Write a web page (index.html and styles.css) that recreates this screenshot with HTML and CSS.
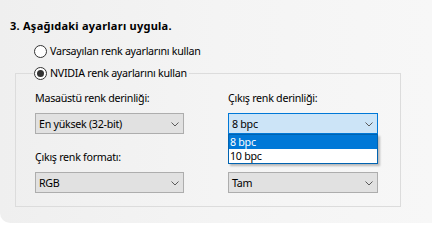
FILE: index.html
```html
<!DOCTYPE html>
<html lang="tr">
<head>
<meta charset="utf-8">
<link rel="stylesheet" href="styles.css">
</head>
<body>
<div class="panel">
  <h3 class="heading">3. Aşağıdaki ayarları uygula.</h3>
  <div class="radio-row">
    <span class="radio"></span><span>Varsayılan renk ayarlarını kullan</span>
  </div>
  <fieldset class="group">
    <legend class="radio-row legend">
      <span class="radio checked"></span><span>NVIDIA renk ayarlarını kullan</span>
    </legend>
    <div class="grid">
      <div class="field">
        <div class="label">Masaüstü renk derinliği:</div>
        <div class="select"><span>En yüksek (32-bit)</span><svg class="chev" width="8" height="5" viewBox="0 0 8 5"><polyline points="0.5,0.5 4,4 7.5,0.5" fill="none" stroke="#5a5a5a" stroke-width="1"/></svg></div>
      </div>
      <div class="field">
        <div class="label">Çıkış renk derinliği:</div>
        <div class="select active"><span>8 bpc</span><svg class="chev" width="8" height="5" viewBox="0 0 8 5"><polyline points="0.5,0.5 4,4 7.5,0.5" fill="none" stroke="#5a5a5a" stroke-width="1"/></svg>
          <ul class="list">
            <li class="sel">8 bpc</li>
            <li>10 bpc</li>
          </ul>
        </div>
      </div>
      <div class="field">
        <div class="label">Çıkış renk formatı:</div>
        <div class="select"><span>RGB</span><svg class="chev" width="8" height="5" viewBox="0 0 8 5"><polyline points="0.5,0.5 4,4 7.5,0.5" fill="none" stroke="#5a5a5a" stroke-width="1"/></svg></div>
      </div>
      <div class="field">
        <div class="label">Çıkış dinamik aralığı:</div>
        <div class="select"><span>Tam</span><svg class="chev" width="8" height="5" viewBox="0 0 8 5"><polyline points="0.5,0.5 4,4 7.5,0.5" fill="none" stroke="#5a5a5a" stroke-width="1"/></svg></div>
      </div>
    </div>
  </fieldset>
</div>
</body>
</html>
```
FILE: styles.css
```css
html, body {
  margin: 0;
  padding: 0;
  background: #ffffff;
}
body {
  font-family: "Noto Sans", "Open Sans", sans-serif;
  font-size: 10.7px;
  letter-spacing: -0.28px;
  line-height: 16px;
  color: #000;
}
.panel {
  height: 223px;
  box-sizing: border-box;
  padding: 18px 0 0 0;
  background: linear-gradient(to right, #efefef 0%, #f4f4f4 50%, #f7f7f7 100%);
  border-bottom-left-radius: 10px;
}
.heading {
  margin: 0 0 0 10px;
  font-size: 11px;
  letter-spacing: 0.25px;
  line-height: 16px;
  font-weight: bold;
}
.radio-row {
  display: flex;
  align-items: center;
  gap: 3px;
  height: 16px;
}
.panel > .radio-row {
  margin: 9px 0 0 34px;
}
.radio {
  box-sizing: border-box;
  width: 13px;
  height: 13px;
  border: 1px solid #333;
  border-radius: 50%;
  background: #fff;
  display: flex;
  align-items: center;
  justify-content: center;
}
.radio.checked::after {
  content: "";
  width: 7px;
  height: 7px;
  border-radius: 50%;
  background: #333;
}
.group {
  margin: 6px 31px 0 15px;
  padding: 0 21px 13px 19px;
  border: 1px solid #dcdcdc;
}
.legend {
  padding: 0 2px 0 0;
  margin-left: -1px;
}
.grid {
  display: grid;
  grid-template-columns: 149px 150px;
  column-gap: 44px;
  row-gap: 15px;
  margin-top: 9px;
}
.label {
  height: 16px;
  margin-bottom: 7px;
  white-space: nowrap;
}
.select {
  position: relative;
  box-sizing: border-box;
  height: 21px;
  border: 1px solid #adadad;
  background: #e1e1e1;
  display: flex;
  align-items: center;
  justify-content: space-between;
  padding: 0 4px 0 3px;
}
.select.active {
  background: #cce4f7;
  border-color: #0078d7;
}
.chev {
  display: block;
  margin-top: 1px;
}
.list {
  position: absolute;
  left: -1px;
  right: -1px;
  top: 20px;
  margin: 0;
  padding: 0;
  list-style: none;
  background: #fff;
  border: 1px solid #0063b1;
  box-shadow: 2px 2px 2px rgba(0, 0, 0, 0.25);
  z-index: 2;
}
.list li {
  height: 14px;
  line-height: 14px;
  padding-left: 1px;
}
.list li.sel {
  background: #0078d7;
  color: #fff;
}
```
